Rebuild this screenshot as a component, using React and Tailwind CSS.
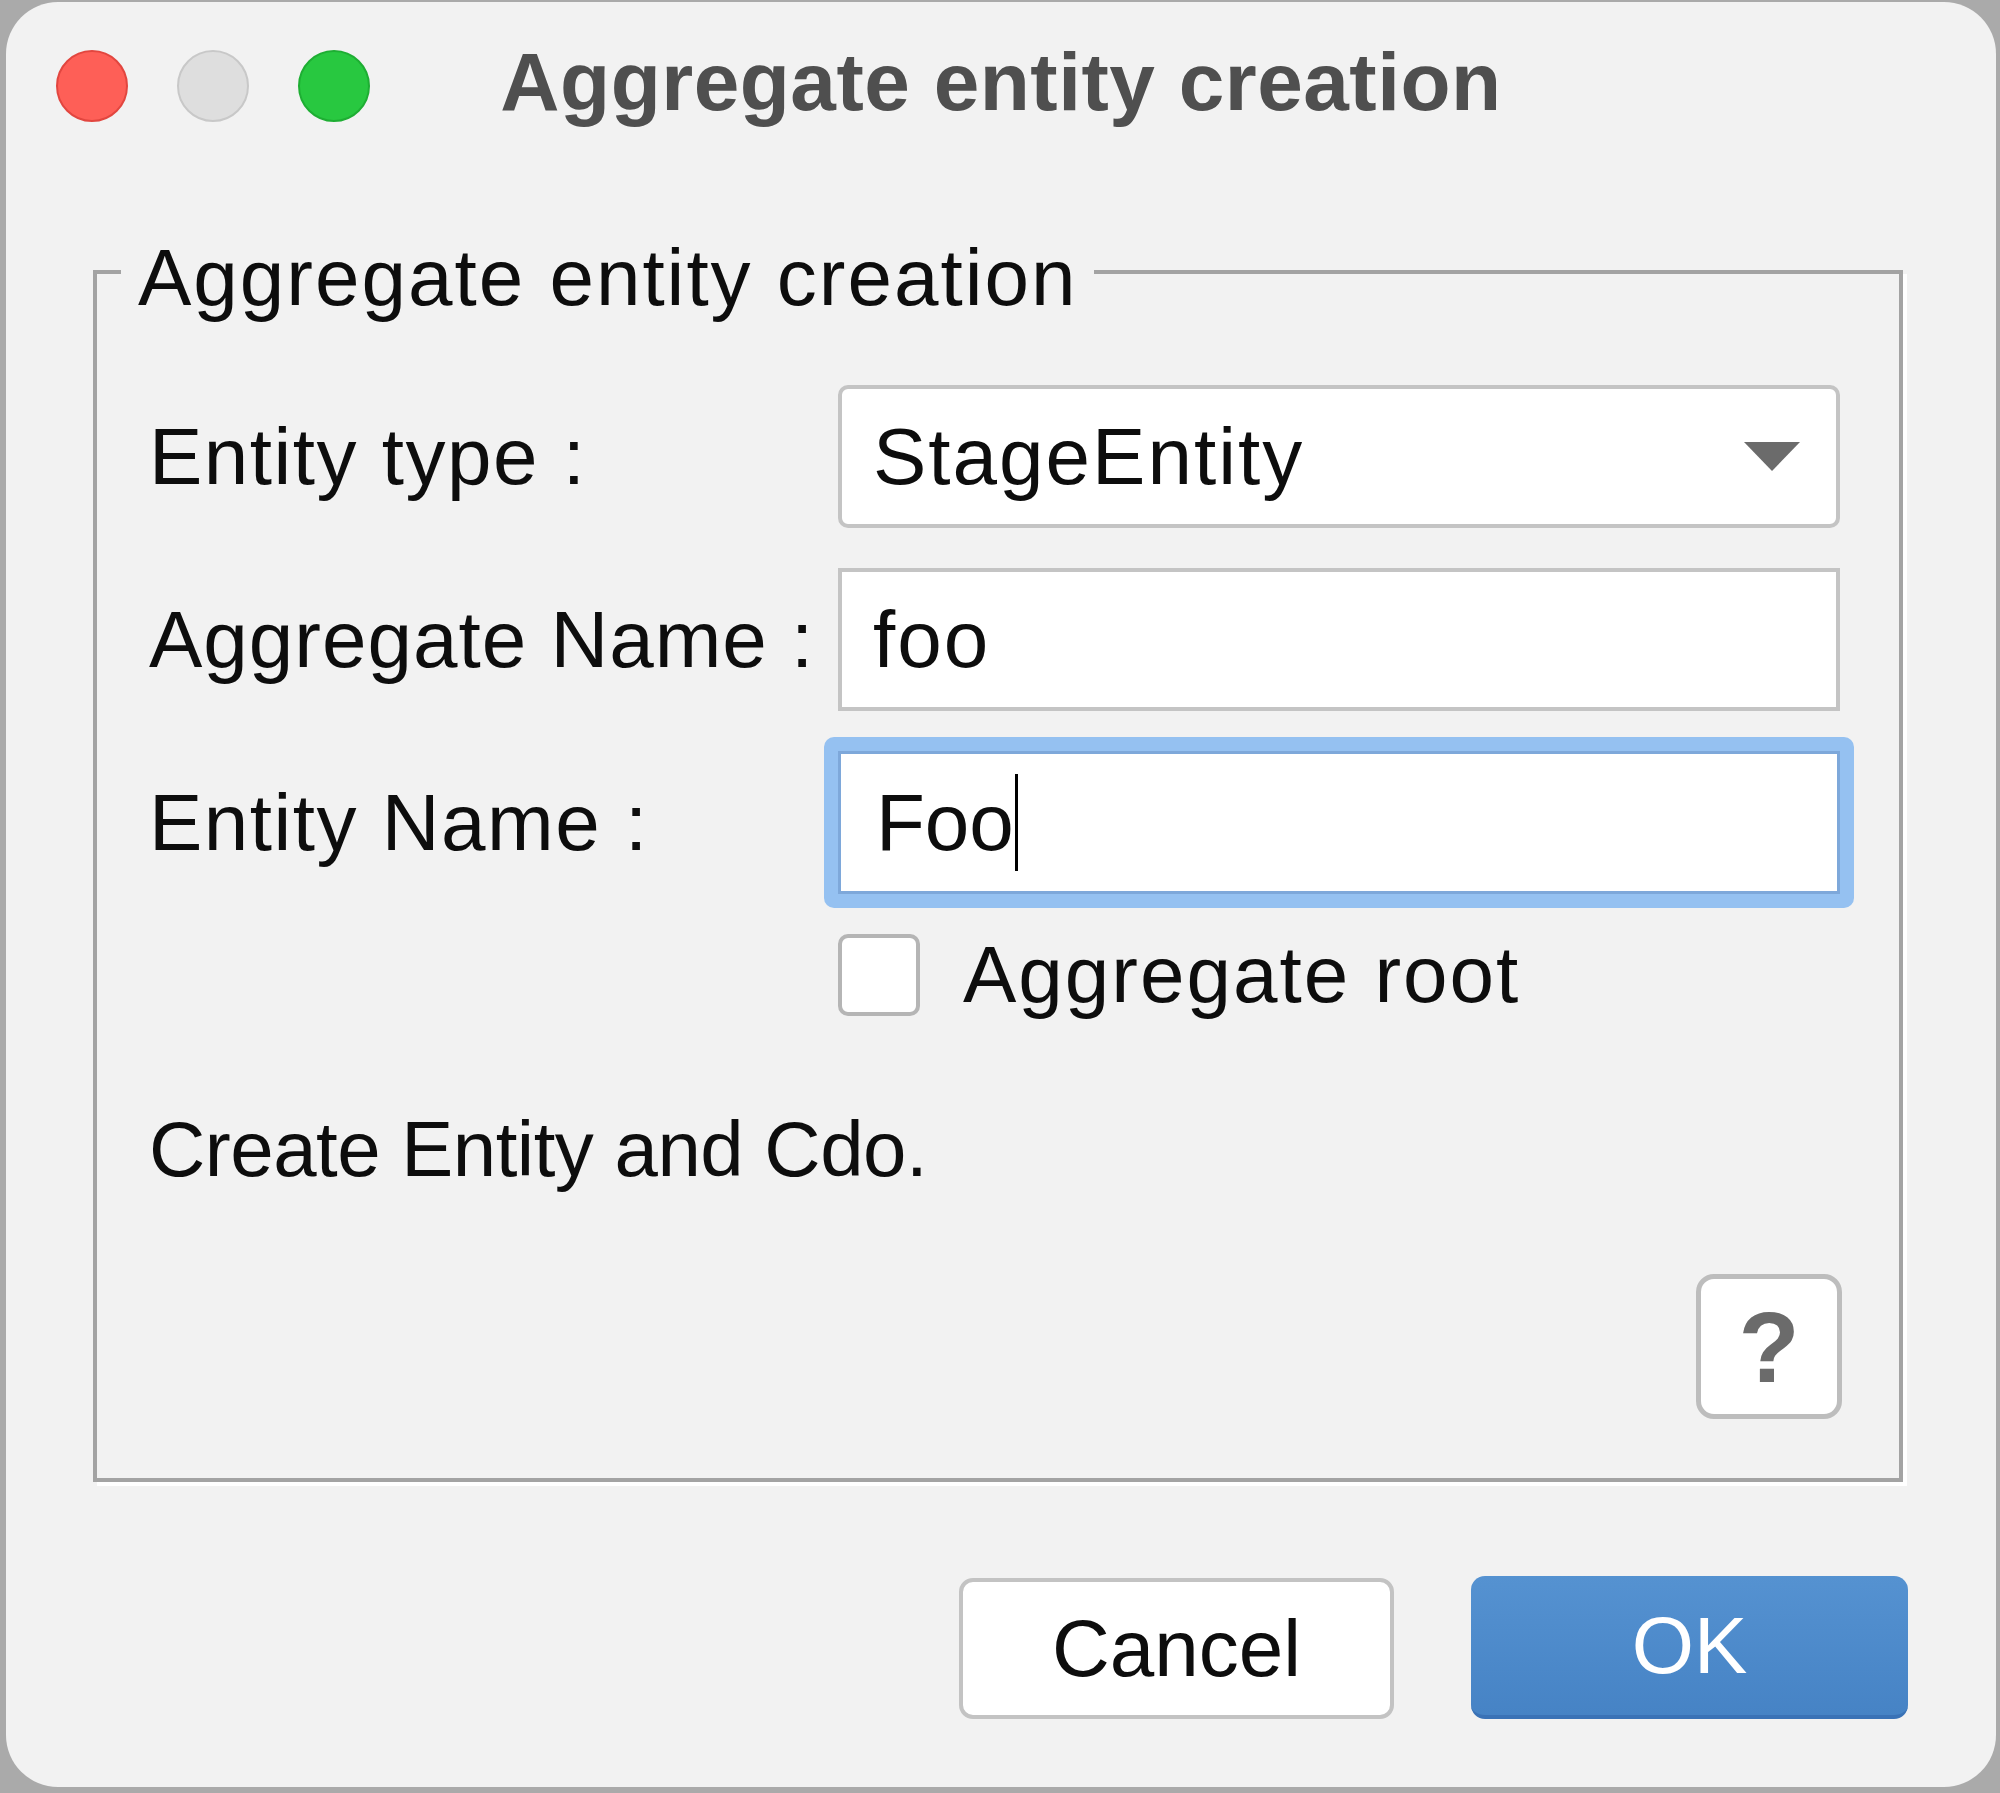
export default function App() {
  return (
    <div className="w-[2000px] h-[1793px] bg-[#aaaaaa] pt-[2px] pl-[6px] font-['Liberation_Sans',Arial,sans-serif] text-[#0d0d0d]">
      <div className="w-[1990px] h-[1785px] rounded-[52px] bg-[#f2f2f2] flex flex-col">
        {/* title bar */}
        <div className="grid grid-cols-[1fr_auto_1fr] items-center h-[168px]">
          <div className="flex items-center gap-[49px] pl-[50px]">
            <span className="w-[72px] h-[72px] rounded-full bg-[#fe5f57] border-2 border-[#e2463f]" />
            <span className="w-[72px] h-[72px] rounded-full bg-[#dedede] border-2 border-[#c8c8c8]" />
            <span className="w-[72px] h-[72px] rounded-full bg-[#28c840] border-2 border-[#1eae33]" />
          </div>
          <h1 className="pb-[8px] text-[82px] leading-none font-bold text-[#4f4f4f] tracking-[0.5px]">
            Aggregate entity creation
          </h1>
          <div />
        </div>

        {/* group box */}
        <fieldset className="ml-[87px] mt-[56px] w-[1810px] border-4 border-[#a3a3a3] shadow-[4px_4px_0_0_#ffffff] pl-[24px] pr-[59px] pt-[67px] pb-[59px]">
          <legend className="px-[17px] pt-[12px] text-[80px] leading-[80px] tracking-[2px]">
            Aggregate entity creation
          </legend>

          <div className="pl-[28px]">
            <div className="grid grid-cols-[689px_1002px] gap-y-[40px] items-center">
              <span className="text-[80px] leading-[80px] tracking-[1.5px]">Entity type :</span>
              <div className="h-[143px] rounded-[10px] border-4 border-[#c4c4c4] bg-white flex items-center justify-between pl-[31px] pr-[36px]">
                <span className="text-[80px] leading-[80px] tracking-[2px]">StageEntity</span>
                <svg width="56" height="29" viewBox="0 0 56 29">
                  <polygon points="0,0 56,0 28,29" fill="#6b6b6b" />
                </svg>
              </div>

              <span className="text-[80px] leading-[80px] tracking-[1px]">Aggregate Name :</span>
              <div className="h-[143px] border-4 border-[#c4c4c4] bg-white flex items-center pl-[31px]">
                <span className="text-[80px] leading-[80px] tracking-[2px]">foo</span>
              </div>

              <span className="text-[80px] leading-[80px] tracking-[1.5px]">Entity Name :</span>
              <div className="-m-[14px] p-[14px] rounded-[10px] bg-[#95c1f1]">
                <div className="h-[143px] border-[3px] border-[#7ea8da] bg-white flex items-center pl-[35px]">
                  <span className="text-[80px] leading-[80px]">Foo</span>
                  <span className="ml-[1px] w-[3px] h-[97px] bg-black" />
                </div>
              </div>

              <div />
              <label className="flex items-center gap-[43px]">
                <span className="w-[82px] h-[82px] rounded-[10px] border-4 border-[#b5b5b5] bg-white" />
                <span className="text-[80px] leading-[80px] tracking-[2px]">Aggregate root</span>
              </label>
            </div>

            <p className="mt-[94px] text-[78px] leading-[78px] tracking-[-0.5px]">Create Entity and Cdo.</p>

            <div className="flex justify-end mt-[86px] -mr-[2px]">
              <button className="w-[146px] h-[145px] rounded-[18px] border-[5px] border-[#bdbdbd] bg-white flex items-center justify-center text-[100px] leading-none font-bold text-[#6b6b6b]">
                ?
              </button>
            </div>
          </div>
        </fieldset>

        {/* dialog buttons */}
        <div className="flex justify-end items-end gap-[77px] mt-[94px] pr-[88px]">
          <button className="w-[435px] h-[141px] rounded-[14px] border-4 border-[#c3c3c3] bg-white text-[80px] leading-none">
            Cancel
          </button>
          <button className="w-[437px] h-[143px] rounded-[14px] bg-linear-to-b from-[#5592d1] to-[#4683c5] border-b-4 border-[#3a72b6] text-white text-[80px] leading-none">
            OK
          </button>
        </div>
      </div>
    </div>
  );
}
